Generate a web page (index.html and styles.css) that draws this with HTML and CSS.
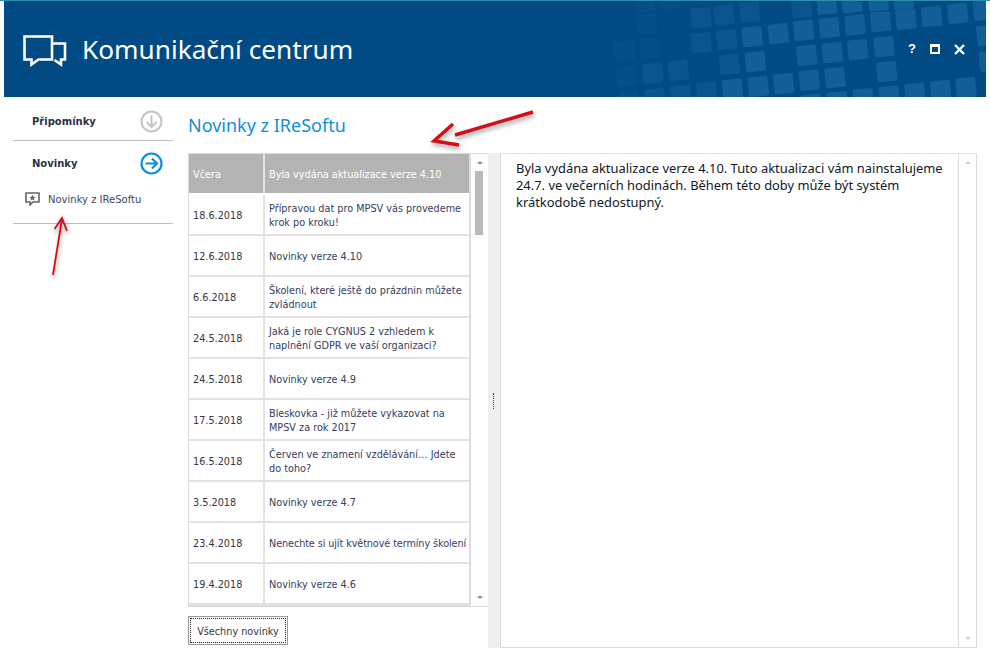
FILE: index.html
```html
<!DOCTYPE html>
<html lang="cs">
<head>
<meta charset="utf-8">
<title>Komunikační centrum</title>
<link rel="stylesheet" href="styles.css">
</head>
<body>
<div class="topline"></div>
<header class="header">
  <svg class="pattern" viewBox="0 0 1188 288" aria-hidden="true">
    <defs><rect id="s" x="-30" y="-30" width="60" height="60" rx="6" transform="rotate(-6)"/></defs>
    <g class="sq-faint">
      <use href="#s" x="170" y="68"/><use href="#s" x="180" y="142"/><use href="#s" x="103" y="150"/>
      <use href="#s" x="110" y="226"/><use href="#s" x="165" y="5"/><use href="#s" x="240" y="-5"/>
      <use href="#s" x="117" y="300"/>
    </g>
    <g class="sq-mid">
      <use href="#s" x="188" y="217"/><use href="#s" x="265" y="208"/><use href="#s" x="195" y="292"/>
      <use href="#s" x="272" y="283"/><use href="#s" x="333" y="50"/><use href="#s" x="402" y="42"/>
      <use href="#s" x="479" y="33"/><use href="#s" x="333" y="125"/><use href="#s" x="410" y="115"/>
      <use href="#s" x="418" y="190"/><use href="#s" x="350" y="274"/><use href="#s" x="635" y="20"/>
    </g>
    <g class="sq">
      <use href="#s" x="487" y="107"/><use href="#s" x="565" y="98"/><use href="#s" x="641" y="88"/>
      <use href="#s" x="718" y="80"/><use href="#s" x="795" y="72"/><use href="#s" x="872" y="62"/>
      <use href="#s" x="948" y="55"/><use href="#s" x="1025" y="46"/><use href="#s" x="1103" y="37"/>
      <use href="#s" x="1180" y="28"/><use href="#s" x="1190" y="103"/><use href="#s" x="1198" y="180"/>
      <use href="#s" x="650" y="163"/><use href="#s" x="727" y="155"/><use href="#s" x="803" y="146"/>
      <use href="#s" x="882" y="137"/><use href="#s" x="496" y="182"/><use href="#s" x="890" y="212"/>
      <use href="#s" x="427" y="265"/><use href="#s" x="505" y="256"/><use href="#s" x="581" y="248"/>
      <use href="#s" x="658" y="238"/><use href="#s" x="735" y="230"/><use href="#s" x="665" y="310"/>
      <use href="#s" x="743" y="302"/><use href="#s" x="820" y="293"/><use href="#s" x="898" y="285"/>
      <use href="#s" x="975" y="277"/><use href="#s" x="1052" y="268"/><use href="#s" x="1128" y="260"/>
      <use href="#s" x="710" y="10"/><use href="#s" x="785" y="5"/><use href="#s" x="865" y="0"/>
      <use href="#s" x="940" y="-5"/>
    </g>
  </svg>
  <svg class="logo" width="44" height="32" viewBox="0 0 44 32" aria-hidden="true">
    <path class="logo-line" d="M1.5 1.5H29V24.5H15.5L8.500 29.500V24.500H1.500Z"/>
    <path class="logo-line" d="M29 8.500H42V24.500H38V29.500L31.500 25"/>
  </svg>
  <h1 class="app-title">Komunikační centrum</h1>
  <div class="win-controls">
    <span class="win-help">?</span>
    <span class="win-max"></span>
    <svg class="win-close" width="11" height="11" viewBox="0 0 11 11" aria-hidden="true"><path d="M1 1L10 10M10 1L1 10"/></svg>
  </div>
</header>
<main class="main">
  <nav class="sidebar">
    <div class="nav-head nav-first">
      <span>Připomínky</span>
      <svg class="nav-icon grey" width="23" height="23" viewBox="0 0 23 23" aria-hidden="true"><circle cx="11.500" cy="11.500" r="10"/><path d="M11.500 5.500V17M6.500 12L11.500 17L16.500 12"/></svg>
    </div>
    <div class="nav-head">
      <span>Novinky</span>
      <svg class="nav-icon blue" width="23" height="23" viewBox="0 0 23 23" aria-hidden="true"><circle cx="11.500" cy="11.500" r="10"/><path d="M5.500 11.500H17M12 6.500L17 11.500L12 16.500"/></svg>
    </div>
    <div class="nav-item">
      <svg width="15" height="14" viewBox="0 0 15 14" aria-hidden="true"><path class="bubble" d="M1 1H14V10H8L5 13V10H1Z"/><path class="star" d="M7.500 2.500L8.400 4.800L10.800 4.900L8.900 6.400L9.600 8.700L7.500 7.400L5.400 8.700L6.100 6.400L4.200 4.900L6.600 4.800Z"/></svg>
      <span>Novinky z IReSoftu</span>
    </div>
  </nav>
  <section class="content">
    <h2 class="page-title">Novinky z IReSoftu</h2>
    <div class="panels">
      <div class="left-col">
        <div class="list">
          <div class="rows">
            <div class="row selected"><div class="date">Včera</div><div class="subject">Byla vydána aktualizace verze 4.10</div></div>
            <div class="row"><div class="date">18.6.2018</div><div class="subject">Přípravou dat pro MPSV vás provedeme krok po kroku!</div></div>
            <div class="row"><div class="date">12.6.2018</div><div class="subject">Novinky verze 4.10</div></div>
            <div class="row"><div class="date">6.6.2018</div><div class="subject">Školení, které ještě do prázdnin můžete zvládnout</div></div>
            <div class="row"><div class="date">24.5.2018</div><div class="subject">Jaká je role CYGNUS 2 vzhledem k naplnění GDPR ve vaší organizaci?</div></div>
            <div class="row"><div class="date">24.5.2018</div><div class="subject">Novinky verze 4.9</div></div>
            <div class="row"><div class="date">17.5.2018</div><div class="subject">Bleskovka - již můžete vykazovat na MPSV za rok 2017</div></div>
            <div class="row"><div class="date">16.5.2018</div><div class="subject">Červen ve znamení vzdělávání… Jdete do toho?</div></div>
            <div class="row"><div class="date">3.5.2018</div><div class="subject">Novinky verze 4.7</div></div>
            <div class="row"><div class="date">23.4.2018</div><div class="subject subject-tight">Nenechte si ujít květnové termíny školení</div></div>
            <div class="row"><div class="date">19.4.2018</div><div class="subject">Novinky verze 4.6</div></div>
            <div class="row row-cut"><div class="date"></div><div class="subject"></div></div>
          </div>
          <div class="scrollbar">
            <span class="arrow-up"></span>
            <span class="thumb"></span>
            <span class="arrow-down"></span>
          </div>
        </div>
        <div class="button-row"><button class="btn" type="button"><span class="btn-focus">Všechny novinky</span></button></div>
      </div>
      <div class="splitter"><span class="grip"></span></div>
      <div class="detail">
        <p class="detail-text">Byla vydána aktualizace verze 4.10. Tuto aktualizaci vám nainstalujeme 24.7. ve večerních hodinách. Během této doby může být systém krátkodobě nedostupný.</p>
        <div class="detail-scroll"><span class="arrow-up"></span><span class="arrow-down"></span></div>
      </div>
    </div>
  </section>
</main>
<svg class="annotations" width="990" height="658" viewBox="0 0 990 658" aria-hidden="true">
  <defs><filter id="shadow" x="-20%" y="-20%" width="140%" height="150%"><feDropShadow dx="1" dy="3" stdDeviation="2" flood-color="#000" flood-opacity=".35"/></filter></defs>
  <g class="anno" filter="url(#shadow)">
    <path class="anno-big" d="M533 112L455 135M453 124L434 141L459 145"/>
    <path class="anno-small" d="M53 275L62 219M54.500 229L62 218L67 231"/>
  </g>
</svg>
</body>
</html>
```
FILE: styles.css
```css
* { box-sizing: border-box; }
html, body { margin: 0; height: 100%; }
body {
  width: 990px;
  height: 658px;
  overflow: hidden;
  position: relative;
  background: #fff;
  font-family: "DejaVu Sans", sans-serif;
  color: #26304d;
}
.topline { height: 1px; background: #2f8fb0; }
.header {
  position: relative;
  height: 96px;
  margin: 0 4px;
  background: #014a84;
  display: flex;
  align-items: center;
  overflow: hidden;
}
.pattern { position: absolute; right: 0; top: 0; width: 396px; height: 96px; }
.sq { fill: #115e98; }
.sq-mid { fill: #0a558f; }
.sq-faint { fill: #054e88; }
.logo { position: relative; flex: none; margin-left: 19px; margin-top: 4px; }
.logo-line { fill: none; stroke: #fff; stroke-width: 2.6; }
.app-title {
  position: relative;
  margin: 0 0 0 15px;
  font: 400 26.2px/40px "Noto Sans", sans-serif;
  color: #fff;
}
.win-controls {
  position: relative;
  margin-left: auto;
  margin-right: 21px;
  display: flex;
  align-items: center;
  gap: 14px;
}
.win-help { font: 700 13px/14px "Liberation Sans", sans-serif; color: #fff; width: 8px; }
.win-max { width: 10px; height: 10px; border: 2px solid #fff; border-top-width: 3px; }
.win-close { display: block; }
.win-close path { stroke: #fff; stroke-width: 2.4; fill: none; }
.main { display: flex; height: 551px; }
.sidebar { width: 160px; margin-left: 13px; flex: none; }
.nav-head {
  display: flex;
  align-items: center;
  justify-content: space-between;
  padding: 0 10px 0 19px;
  height: 44px;
  font: 700 10px/14px "DejaVu Sans", sans-serif;
  color: #2a3145;
}
.nav-head span { padding-top: 2px; }
.nav-first { padding-top: 5px; border-bottom: 1px solid #bdbdbd; }
.nav-icon { fill: none; stroke-width: 2; }
.nav-icon.grey { stroke: #c4c4c4; }
.nav-icon.blue { stroke: #0e8fdc; stroke-width: 2.2; }
.nav-item {
  display: flex;
  align-items: center;
  gap: 8px;
  height: 39px;
  padding: 0 0 10px 12px;
  border-bottom: 1px solid #bdbdbd;
  font: 400 10px/14px "DejaVu Sans", sans-serif;
  color: #3d4763;
}
.nav-item span { padding-top: 2px; }
.bubble { fill: none; stroke: #666; stroke-width: 1.6; }
.star { fill: #666; }
.content { margin-left: 15px; width: 789px; flex: none; display: flex; flex-direction: column; }
.page-title {
  margin: 0;
  height: 56px;
  padding-top: 15px;
  font: 400 18px/26px "Noto Sans", sans-serif;
  color: #0e8fdc;
}
.panels { display: flex; height: 495px; }
.left-col { width: 300px; flex: none; display: flex; flex-direction: column; }
.list {
  display: flex;
  height: 454px;
  border: 1px solid #dcdcdc;
  border-right: 0;
}
.rows { width: 282px; flex: none; overflow: hidden; border-right: 2px solid #dcdcdc; border-bottom: 1px solid #dcdcdc; }
.row { display: flex; height: 41px; border-bottom: 2px solid #e2e2e2; font: 400 9.7px/14px "DejaVu Sans", sans-serif; }
.row-cut { height: 20px; border-bottom: 0; }
.date { width: 76px; flex: none; display: flex; align-items: center; padding: 2px 0 0 4px; border-right: 2px solid #e2e2e2; color: #33363f; }
.subject { flex: 1; display: flex; align-items: center; padding: 2px 0 0 4px; color: #33405f; }
.subject-tight { letter-spacing: -0.1px; white-space: nowrap; }
.selected { background: #b4b4b4; border-bottom-color: #fff; }
.selected .date, .selected .subject { color: #fff; }
.selected .date { border-right-color: #e6e6e6; }
.scrollbar { position: relative; flex: 1; }
.thumb { position: absolute; left: 4px; top: 17px; width: 8px; height: 64px; background: #b9b9b9; }
.arrow-up, .arrow-down { position: absolute; left: 50%; margin-left: -3px; width: 0; height: 0; border-left: 3px solid transparent; border-right: 3px solid transparent; }
.arrow-up { top: 7px; border-bottom: 3px solid #8f8f8f; }
.arrow-down { bottom: 7px; border-top: 3px solid #8f8f8f; }
.button-row { padding-top: 9px; }
.btn {
  display: block;
  width: 100px;
  height: 29px;
  padding: 1px;
  background: #fff;
  border: 1px solid #9a9a9a;
  font: 400 9.7px/14px "DejaVu Sans", sans-serif;
  color: #33363f;
}
.btn-focus { display: flex; align-items: center; justify-content: center; height: 100%; padding-top: 2px; border: 1px dotted #222; }
.splitter { width: 13px; flex: none; background: #efefef; border-right: 1px solid #dcdcdc; position: relative; }
.grip { position: absolute; left: 5px; top: 240px; height: 16px; border-left: 1px dotted #444; }
.detail { position: relative; width: 476px; flex: none; border-top: 1px solid #e2e2e2; border-right: 1px solid #dcdcdc; border-bottom: 1px solid #dcdcdc; padding: 6px 26px 0 15px; }
.detail-text { margin: 0; font: 400 12.9px/17px "Noto Sans", sans-serif; color: #111827; }
.detail-scroll { position: absolute; right: 0; top: 0; bottom: 0; width: 18px; border-left: 1px solid #dcdcdc; }
.detail-scroll .arrow-up { border-bottom-color: #cfcfcf; }
.detail-scroll .arrow-down { border-top-color: #cfcfcf; }
.annotations { position: absolute; left: 0; top: 0; pointer-events: none; }
.anno path { fill: none; stroke: #d40a12; }
.anno-big { stroke-width: 3.4; }
.anno-small { stroke-width: 1.8; }
```
